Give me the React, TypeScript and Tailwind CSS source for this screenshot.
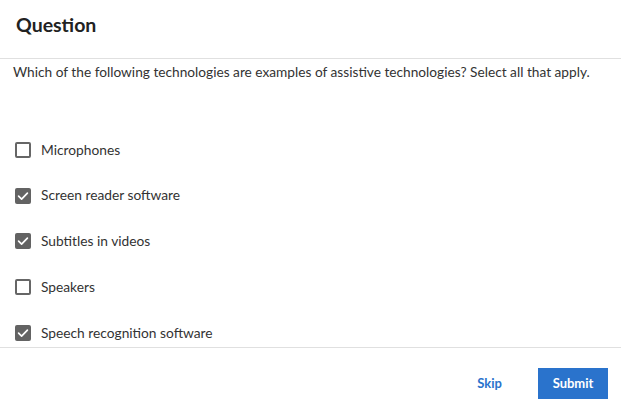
import { useState } from 'react';

const OPTIONS = [
  { label: 'Microphones', checked: false },
  { label: 'Screen reader software', checked: true },
  { label: 'Subtitles in videos', checked: true },
  { label: 'Speakers', checked: false },
  { label: 'Speech recognition software', checked: true },
];

function Checkbox({ checked }: { checked: boolean }) {
  if (!checked) {
    return <span className="block w-4 h-4 rounded-[2px] border-2 border-[#666666] bg-white" />;
  }
  return (
    <span className="flex w-4 h-4 items-center justify-center rounded-[2px] bg-[#636363]">
      <svg viewBox="0 0 16 16" className="w-4 h-4" fill="none">
        <path d="M3.6 8.2 6.6 11.1 12.4 5.2" stroke="white" strokeWidth="1.7" strokeLinecap="round" strokeLinejoin="round" />
      </svg>
    </span>
  );
}

export default function App() {
  const [items, setItems] = useState(OPTIONS);

  const toggle = (i: number) =>
    setItems((prev) => prev.map((o, j) => (j === i ? { ...o, checked: !o.checked } : o)));

  return (
    <div className="w-[621px] h-[419px] bg-white flex flex-col text-[#333333]" style={{ fontFamily: 'Lato, "Liberation Sans", sans-serif' }}>
      <header className="h-[59px] shrink-0 border-b border-[#e0e0e0] px-4 flex items-center">
        <h2 className="text-[19.5px] font-bold text-[#222222] -mt-[8px]">Question</h2>
      </header>

      <div className="h-[288px] shrink-0 overflow-hidden">
        <p className="px-[13px] pt-[3px] text-[13.7px] leading-5 text-[#333333]">
          Which of the following technologies are examples of assistive technologies? Select all that apply.
        </p>
        <ul className="mt-[45px]">
          {items.map((o, i) => (
            <li key={o.label}>
              <button
                type="button"
                onClick={() => toggle(i)}
                className="h-[45.75px] w-full flex items-center gap-[10px] pl-[15px] text-left"
              >
                <Checkbox checked={o.checked} />
                <span className="text-[13.75px] text-[#333333]">{o.label}</span>
              </button>
            </li>
          ))}
        </ul>
      </div>

      <footer className="flex-1 border-t border-[#e0e0e0] flex items-center justify-end gap-[36px] pr-[13px]">
        <button type="button" className="text-[13px] font-bold text-[#2a73cc]">Skip</button>
        <button type="button" className="w-[70px] h-[31px] bg-[#2a73cc] text-white text-[13px] font-bold">
          Submit
        </button>
      </footer>
    </div>
  );
}
